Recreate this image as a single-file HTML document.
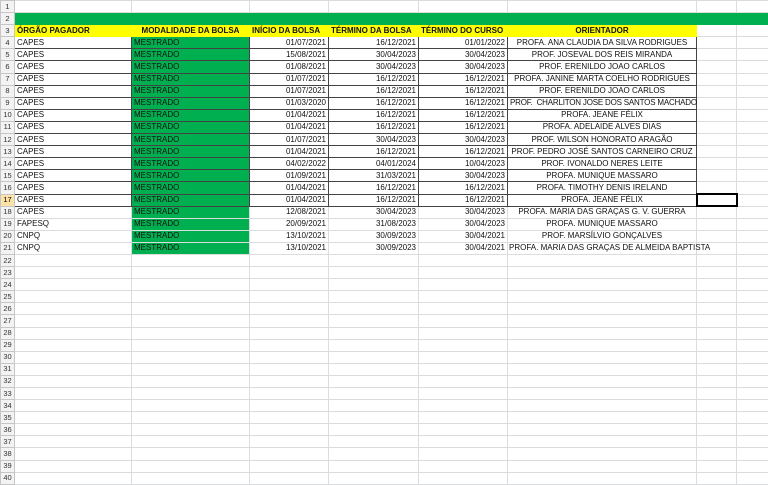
<!DOCTYPE html>
<html><head><meta charset="utf-8"><style>
body{margin:0;width:768px;height:485px;overflow:hidden;background:#fff;font-family:"Liberation Sans",sans-serif;font-size:8px;color:#111}
table{border-collapse:collapse;table-layout:fixed;width:768px}
tr{height:12.1px}
td{height:10.6px;padding:0 2px;border:1px solid #dadcdd;white-space:nowrap;overflow:visible;line-height:10px}
td.h{background:#f3f3f3;color:#333;text-align:center;padding:0;border-color:#c6c6c6;font-size:7.5px}
tr.g td:not(.h){background:#00b050;border-color:#00b050}
tr.y td.d{background:#ffff00;font-weight:bold;border-color:#ffff00}
tr.b td.d{border:1px solid #444}
td.m{background:#00b050}
td.r{text-align:right}td.c{text-align:center}
td.sel{outline:2px solid #000;outline-offset:-1px}
td.ha{background:#fce2a7;color:#000}
</style></head><body>
<table>
<colgroup><col style="width:14px"><col style="width:117px"><col style="width:118px"><col style="width:79px"><col style="width:90px"><col style="width:89px"><col style="width:189px"><col style="width:40px"><col style="width:32px"></colgroup>
<tr><td class="h">1</td><td></td><td></td><td></td><td></td><td></td><td></td><td></td><td></td></tr>
<tr class="g"><td class="h">2</td><td></td><td></td><td></td><td></td><td></td><td></td><td></td><td></td></tr>
<tr class="y"><td class="h">3</td><td class="d">ÓRGÃO PAGADOR</td><td class="d c">MODALIDADE DA BOLSA</td><td class="d">INÍCIO DA BOLSA</td><td class="d">TÉRMINO DA BOLSA</td><td class="d">TÉRMINO DO CURSO</td><td class="d c">ORIENTADOR</td><td></td><td></td></tr>
<tr class="b"><td class="h">4</td><td class="d">CAPES</td><td class="d m">MESTRADO</td><td class="d r">01/07/2021</td><td class="d r">16/12/2021</td><td class="d r">01/01/2022</td><td class="d c">PROFA. ANA CLAUDIA DA SILVA RODRIGUES</td><td></td><td></td></tr>
<tr class="b"><td class="h">5</td><td class="d">CAPES</td><td class="d m">MESTRADO</td><td class="d r">15/08/2021</td><td class="d r">30/04/2023</td><td class="d r">30/04/2023</td><td class="d c">PROF. JOSEVAL DOS REIS MIRANDA</td><td></td><td></td></tr>
<tr class="b"><td class="h">6</td><td class="d">CAPES</td><td class="d m">MESTRADO</td><td class="d r">01/08/2021</td><td class="d r">30/04/2023</td><td class="d r">30/04/2023</td><td class="d c">PROF. ERENILDO JOAO CARLOS</td><td></td><td></td></tr>
<tr class="b"><td class="h">7</td><td class="d">CAPES</td><td class="d m">MESTRADO</td><td class="d r">01/07/2021</td><td class="d r">16/12/2021</td><td class="d r">16/12/2021</td><td class="d c">PROFA. JANINE MARTA COELHO RODRIGUES</td><td></td><td></td></tr>
<tr class="b"><td class="h">8</td><td class="d">CAPES</td><td class="d m">MESTRADO</td><td class="d r">01/07/2021</td><td class="d r">16/12/2021</td><td class="d r">16/12/2021</td><td class="d c">PROF. ERENILDO JOAO CARLOS</td><td></td><td></td></tr>
<tr class="b"><td class="h">9</td><td class="d">CAPES</td><td class="d m">MESTRADO</td><td class="d r">01/03/2020</td><td class="d r">16/12/2021</td><td class="d r">16/12/2021</td><td class="d c" style="letter-spacing:-0.2px">PROF.&nbsp; CHARLITON JOSE DOS SANTOS MACHADO</td><td></td><td></td></tr>
<tr class="b"><td class="h">10</td><td class="d">CAPES</td><td class="d m">MESTRADO</td><td class="d r">01/04/2021</td><td class="d r">16/12/2021</td><td class="d r">16/12/2021</td><td class="d c">PROFA. JEANE FÉLIX</td><td></td><td></td></tr>
<tr class="b"><td class="h">11</td><td class="d">CAPES</td><td class="d m">MESTRADO</td><td class="d r">01/04/2021</td><td class="d r">16/12/2021</td><td class="d r">16/12/2021</td><td class="d c">PROFA. ADELAIDE ALVES DIAS</td><td></td><td></td></tr>
<tr class="b"><td class="h">12</td><td class="d">CAPES</td><td class="d m">MESTRADO</td><td class="d r">01/07/2021</td><td class="d r">30/04/2023</td><td class="d r">30/04/2023</td><td class="d c">PROF. WILSON HONORATO ARAGÃO</td><td></td><td></td></tr>
<tr class="b"><td class="h">13</td><td class="d">CAPES</td><td class="d m">MESTRADO</td><td class="d r">01/04/2021</td><td class="d r">16/12/2021</td><td class="d r">16/12/2021</td><td class="d c">PROF. PEDRO JOSÉ SANTOS CARNEIRO CRUZ</td><td></td><td></td></tr>
<tr class="b"><td class="h">14</td><td class="d">CAPES</td><td class="d m">MESTRADO</td><td class="d r">04/02/2022</td><td class="d r">04/01/2024</td><td class="d r">10/04/2023</td><td class="d c">PROF. IVONALDO NERES LEITE</td><td></td><td></td></tr>
<tr class="b"><td class="h">15</td><td class="d">CAPES</td><td class="d m">MESTRADO</td><td class="d r">01/09/2021</td><td class="d r">31/03/2021</td><td class="d r">30/04/2023</td><td class="d c">PROFA. MUNIQUE MASSARO</td><td></td><td></td></tr>
<tr class="b"><td class="h">16</td><td class="d">CAPES</td><td class="d m">MESTRADO</td><td class="d r">01/04/2021</td><td class="d r">16/12/2021</td><td class="d r">16/12/2021</td><td class="d c">PROFA. TIMOTHY DENIS IRELAND</td><td></td><td></td></tr>
<tr class="b"><td class="h ha">17</td><td class="d">CAPES</td><td class="d m">MESTRADO</td><td class="d r">01/04/2021</td><td class="d r">16/12/2021</td><td class="d r">16/12/2021</td><td class="d c">PROFA. JEANE FÉLIX</td><td class="sel"></td><td></td></tr>
<tr><td class="h">18</td><td>CAPES</td><td class="m">MESTRADO</td><td class="r">12/08/2021</td><td class="r">30/04/2023</td><td class="r">30/04/2023</td><td class="c">PROFA. MARIA DAS GRAÇAS G. V. GUERRA</td><td></td><td></td></tr>
<tr><td class="h">19</td><td>FAPESQ</td><td class="m">MESTRADO</td><td class="r">20/09/2021</td><td class="r">31/08/2023</td><td class="r">30/04/2023</td><td class="c">PROFA. MUNIQUE MASSARO</td><td></td><td></td></tr>
<tr><td class="h">20</td><td>CNPQ</td><td class="m">MESTRADO</td><td class="r">13/10/2021</td><td class="r">30/09/2023</td><td class="r">30/04/2021</td><td class="c">PROF. MARSÍLVIO GONÇALVES</td><td></td><td></td></tr>
<tr><td class="h">21</td><td>CNPQ</td><td class="m">MESTRADO</td><td class="r">13/10/2021</td><td class="r">30/09/2023</td><td class="r">30/04/2021</td><td style="text-align:left;padding-left:1px">PROFA. MARIA DAS GRAÇAS DE ALMEIDA BAPTISTA</td><td></td><td></td></tr>
<tr><td class="h">22</td><td></td><td></td><td></td><td></td><td></td><td></td><td></td><td></td></tr>
<tr><td class="h">23</td><td></td><td></td><td></td><td></td><td></td><td></td><td></td><td></td></tr>
<tr><td class="h">24</td><td></td><td></td><td></td><td></td><td></td><td></td><td></td><td></td></tr>
<tr><td class="h">25</td><td></td><td></td><td></td><td></td><td></td><td></td><td></td><td></td></tr>
<tr><td class="h">26</td><td></td><td></td><td></td><td></td><td></td><td></td><td></td><td></td></tr>
<tr><td class="h">27</td><td></td><td></td><td></td><td></td><td></td><td></td><td></td><td></td></tr>
<tr><td class="h">28</td><td></td><td></td><td></td><td></td><td></td><td></td><td></td><td></td></tr>
<tr><td class="h">29</td><td></td><td></td><td></td><td></td><td></td><td></td><td></td><td></td></tr>
<tr><td class="h">30</td><td></td><td></td><td></td><td></td><td></td><td></td><td></td><td></td></tr>
<tr><td class="h">31</td><td></td><td></td><td></td><td></td><td></td><td></td><td></td><td></td></tr>
<tr><td class="h">32</td><td></td><td></td><td></td><td></td><td></td><td></td><td></td><td></td></tr>
<tr><td class="h">33</td><td></td><td></td><td></td><td></td><td></td><td></td><td></td><td></td></tr>
<tr><td class="h">34</td><td></td><td></td><td></td><td></td><td></td><td></td><td></td><td></td></tr>
<tr><td class="h">35</td><td></td><td></td><td></td><td></td><td></td><td></td><td></td><td></td></tr>
<tr><td class="h">36</td><td></td><td></td><td></td><td></td><td></td><td></td><td></td><td></td></tr>
<tr><td class="h">37</td><td></td><td></td><td></td><td></td><td></td><td></td><td></td><td></td></tr>
<tr><td class="h">38</td><td></td><td></td><td></td><td></td><td></td><td></td><td></td><td></td></tr>
<tr><td class="h">39</td><td></td><td></td><td></td><td></td><td></td><td></td><td></td><td></td></tr>
<tr><td class="h">40</td><td></td><td></td><td></td><td></td><td></td><td></td><td></td><td></td></tr>
</table>
</body></html>
